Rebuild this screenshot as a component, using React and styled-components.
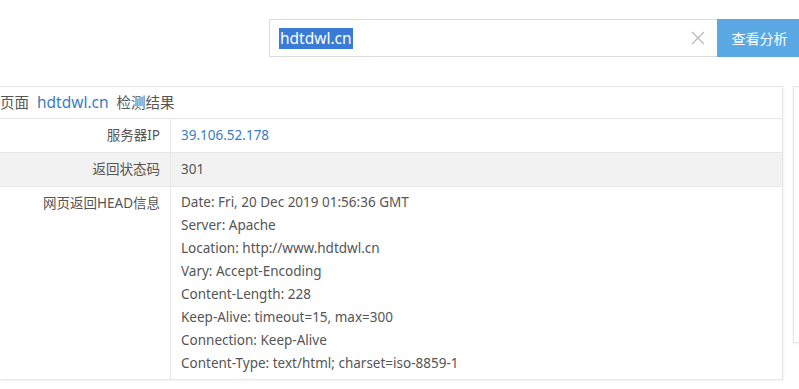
import React from "react";
import styled, { createGlobalStyle } from "styled-components";

const GlobalStyle = createGlobalStyle`
  html, body {
    margin: 0;
    padding: 0;
    background: #fff;
  }
  body {
    font-family: "Noto Sans", "Noto Sans CJK SC", sans-serif;
    color: #555;
    overflow: hidden;
  }
`;

const headLines = [
  "Date: Fri, 20 Dec 2019 01:56:36 GMT",
  "Server: Apache",
  "Location: http://www.hdtdwl.cn",
  "Vary: Accept-Encoding",
  "Content-Length: 228",
  "Keep-Alive: timeout=15, max=300",
  "Connection: Keep-Alive",
  "Content-Type: text/html; charset=iso-8859-1",
];

const App = () => {
  return (
    <Page>
      <GlobalStyle />
      <SearchBar>
        <SearchBox>
          <Selected>hdtdwl.cn</Selected>
          <ClearIcon width="14" height="14" viewBox="0 0 14 14">
            <path d="M1 1 L13 13 M13 1 L1 13" stroke="#b8b8b8" strokeWidth="1.2" fill="none" />
          </ClearIcon>
        </SearchBox>
        <SearchButton>查看分析</SearchButton>
      </SearchBar>

      <Content>
        <Panel>
          <PanelTitle>
            页面<TitleLink>hdtdwl.cn</TitleLink>检测结果
          </PanelTitle>
          <Row>
            <Label>服务器IP</Label>
            <Value>
              <IpLink>39.106.52.178</IpLink>
            </Value>
          </Row>
          <Row $shaded>
            <Label>返回状态码</Label>
            <Value>301</Value>
          </Row>
          <Row>
            <Label>网页返回HEAD信息</Label>
            <Value $multi>
              {headLines.map((line) => (
                <div key={line}>{line}</div>
              ))}
            </Value>
          </Row>
        </Panel>
        <Sidebar />
      </Content>
    </Page>
  );
};

export default App;

/* Styled Components */
const Page = styled.div`
  width: 799px;
  height: 389px;
  overflow: hidden;
`;

const SearchBar = styled.div`
  display: flex;
  padding: 19px 0 0 269px;
  width: 840px;
`;

const SearchBox = styled.div`
  position: relative;
  box-sizing: border-box;
  width: 448px;
  height: 38px;
  border: 1px solid #dcdcdc;
  border-right: none;
  display: flex;
  align-items: center;
  padding-left: 9px;
  font-size: 15.5px;
`;

const Selected = styled.span`
  background: #3a7bd5;
  color: #fff;
  line-height: 21px;
  padding: 0 1px;
`;

const ClearIcon = styled.svg`
  position: absolute;
  right: 12px;
  top: 11px;
`;

const SearchButton = styled.button`
  width: 85px;
  height: 38px;
  border: none;
  background: #5aa9e4;
  color: #fff;
  font-family: "Noto Sans CJK SC", sans-serif;
  font-size: 14px;
  padding: 0;
`;

const Content = styled.div`
  display: flex;
  align-items: flex-start;
  gap: 10px;
  margin-top: 29px;
  width: 1000px;
`;

const Panel = styled.div`
  box-sizing: border-box;
  width: 783px;
  border: 1px solid #e6e6e6;
  border-left: none;
  box-shadow: 1px 1px 2px rgba(0, 0, 0, 0.05);
`;

const PanelTitle = styled.div`
  height: 31px;
  line-height: 31px;
  font-size: 14.5px;
  color: #555;
`;

const TitleLink = styled.span`
  color: #3b7dbb;
  font-size: 15.5px;
  margin: 0 8px;
`;

const Row = styled.div`
  display: flex;
  border-top: 1px solid #e6e6e6;
  background: ${(p) => (p.$shaded ? "#f2f2f2" : "#fff")};
  font-size: 13.5px;
`;

const Label = styled.div`
  box-sizing: border-box;
  width: 171px;
  flex: 0 0 171px;
  text-align: right;
  padding: 5px 10px 0 0;
  line-height: 23px;
  border-right: 1px solid #e6e6e6;
`;

const Value = styled.div`
  flex: 1;
  padding: ${(p) => (p.$multi ? "4px 10px 4px" : "5px 10px")};
  line-height: 23px;
`;

const IpLink = styled.span`
  color: #3b7dbb;
`;

const Sidebar = styled.div`
  box-sizing: border-box;
  width: 200px;
  height: 257px;
  border: 1px solid #e6e6e6;
  box-shadow: 0 1px 2px rgba(0, 0, 0, 0.05);
`;
